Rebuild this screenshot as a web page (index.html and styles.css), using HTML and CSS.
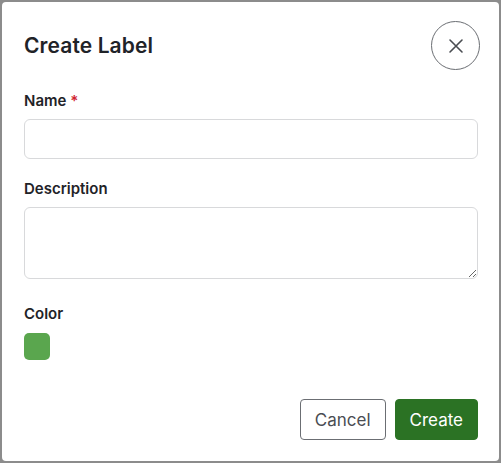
FILE: index.html
```html
<!DOCTYPE html>
<html lang="en">
<head>
    <meta charset="UTF-8">
    <meta name="viewport" content="width=device-width, initial-scale=1.0">
    <title>Create Label</title>
    <link rel="stylesheet" href="styles.css">
</head>
<body>
    <div class="modal">
        <!-- Header -->
        <div class="modal-header">
            <h2>Create Label</h2>
            <button class="close-btn" aria-label="Close">
                <svg width="16" height="16" viewBox="0 0 16 16">
                    <path d="M2 2 L14 14 M14 2 L2 14" stroke="#4a4d52" stroke-width="1.6" stroke-linecap="round"/>
                </svg>
            </button>
        </div>

        <!-- Form -->
        <form class="label-form">
            <label class="field-label" for="name">Name <span class="required">*</span></label>
            <input class="text-input" id="name" type="text">

            <label class="field-label desc-label" for="description">Description</label>
            <textarea class="text-area" id="description"></textarea>

            <label class="field-label color-label">Color</label>
            <div class="swatch"></div>

            <div class="actions">
                <button type="button" class="btn btn-cancel">Cancel</button>
                <button type="button" class="btn btn-create">Create</button>
            </div>
        </form>
    </div>
</body>
</html>
```

FILE: styles.css
```css
* {
    box-sizing: border-box;
}

body {
    font-family: Inter, "Noto Sans", Arial, sans-serif;
    background-color: #8c8c8c;
    margin: 0;
    padding: 2px;
    height: 463px;
}

.modal {
    background-color: white;
    border-radius: 4px;
    height: 459px;
    padding: 19px 21px 21px 22px;
    color: #1f2328;
}

.modal-header {
    display: flex;
    justify-content: space-between;
    align-items: center;
    height: 49px;
}

.modal-header h2 {
    margin: 0;
    font-size: 21px;
    font-weight: 600;
    letter-spacing: 0.1px;
}

.close-btn {
    width: 49px;
    height: 49px;
    margin-right: -2px;
    border-radius: 50%;
    border: 1px solid #6b6e73;
    background: white;
    display: flex;
    align-items: center;
    justify-content: center;
    padding: 0;
    cursor: pointer;
}

.label-form {
    display: flex;
    flex-direction: column;
    margin-top: 21px;
}

.field-label {
    font-size: 15px;
    font-weight: 600;
    line-height: 20px;
    margin-bottom: 8px;
}

.required {
    color: #d1242f;
}

.text-input {
    height: 40px;
    border: 1px solid #d8d9db;
    border-radius: 6px;
    font-family: inherit;
    font-size: 14px;
}

.desc-label {
    margin-top: 20px;
}

.text-area {
    height: 72px;
    border: 1px solid #d8d9db;
    border-radius: 6px;
    font-family: inherit;
    font-size: 14px;
    resize: vertical;
}

.color-label {
    margin-top: 25px;
}

.swatch {
    width: 26px;
    height: 27px;
    border-radius: 5px;
    background-color: #5aa64e;
    margin-top: 1px;
}

.actions {
    display: flex;
    justify-content: flex-end;
    gap: 9px;
    margin-top: 39px;
}

.btn {
    height: 41px;
    padding: 0 14px;
    border-radius: 4px;
    font-family: inherit;
    font-size: 17px;
    cursor: pointer;
}

.btn-cancel {
    background: white;
    border: 1px solid #6b6e73;
    color: #4a4d52;
}

.btn-create {
    background-color: #2b7224;
    border: 1px solid #2b7224;
    color: white;
}
```
